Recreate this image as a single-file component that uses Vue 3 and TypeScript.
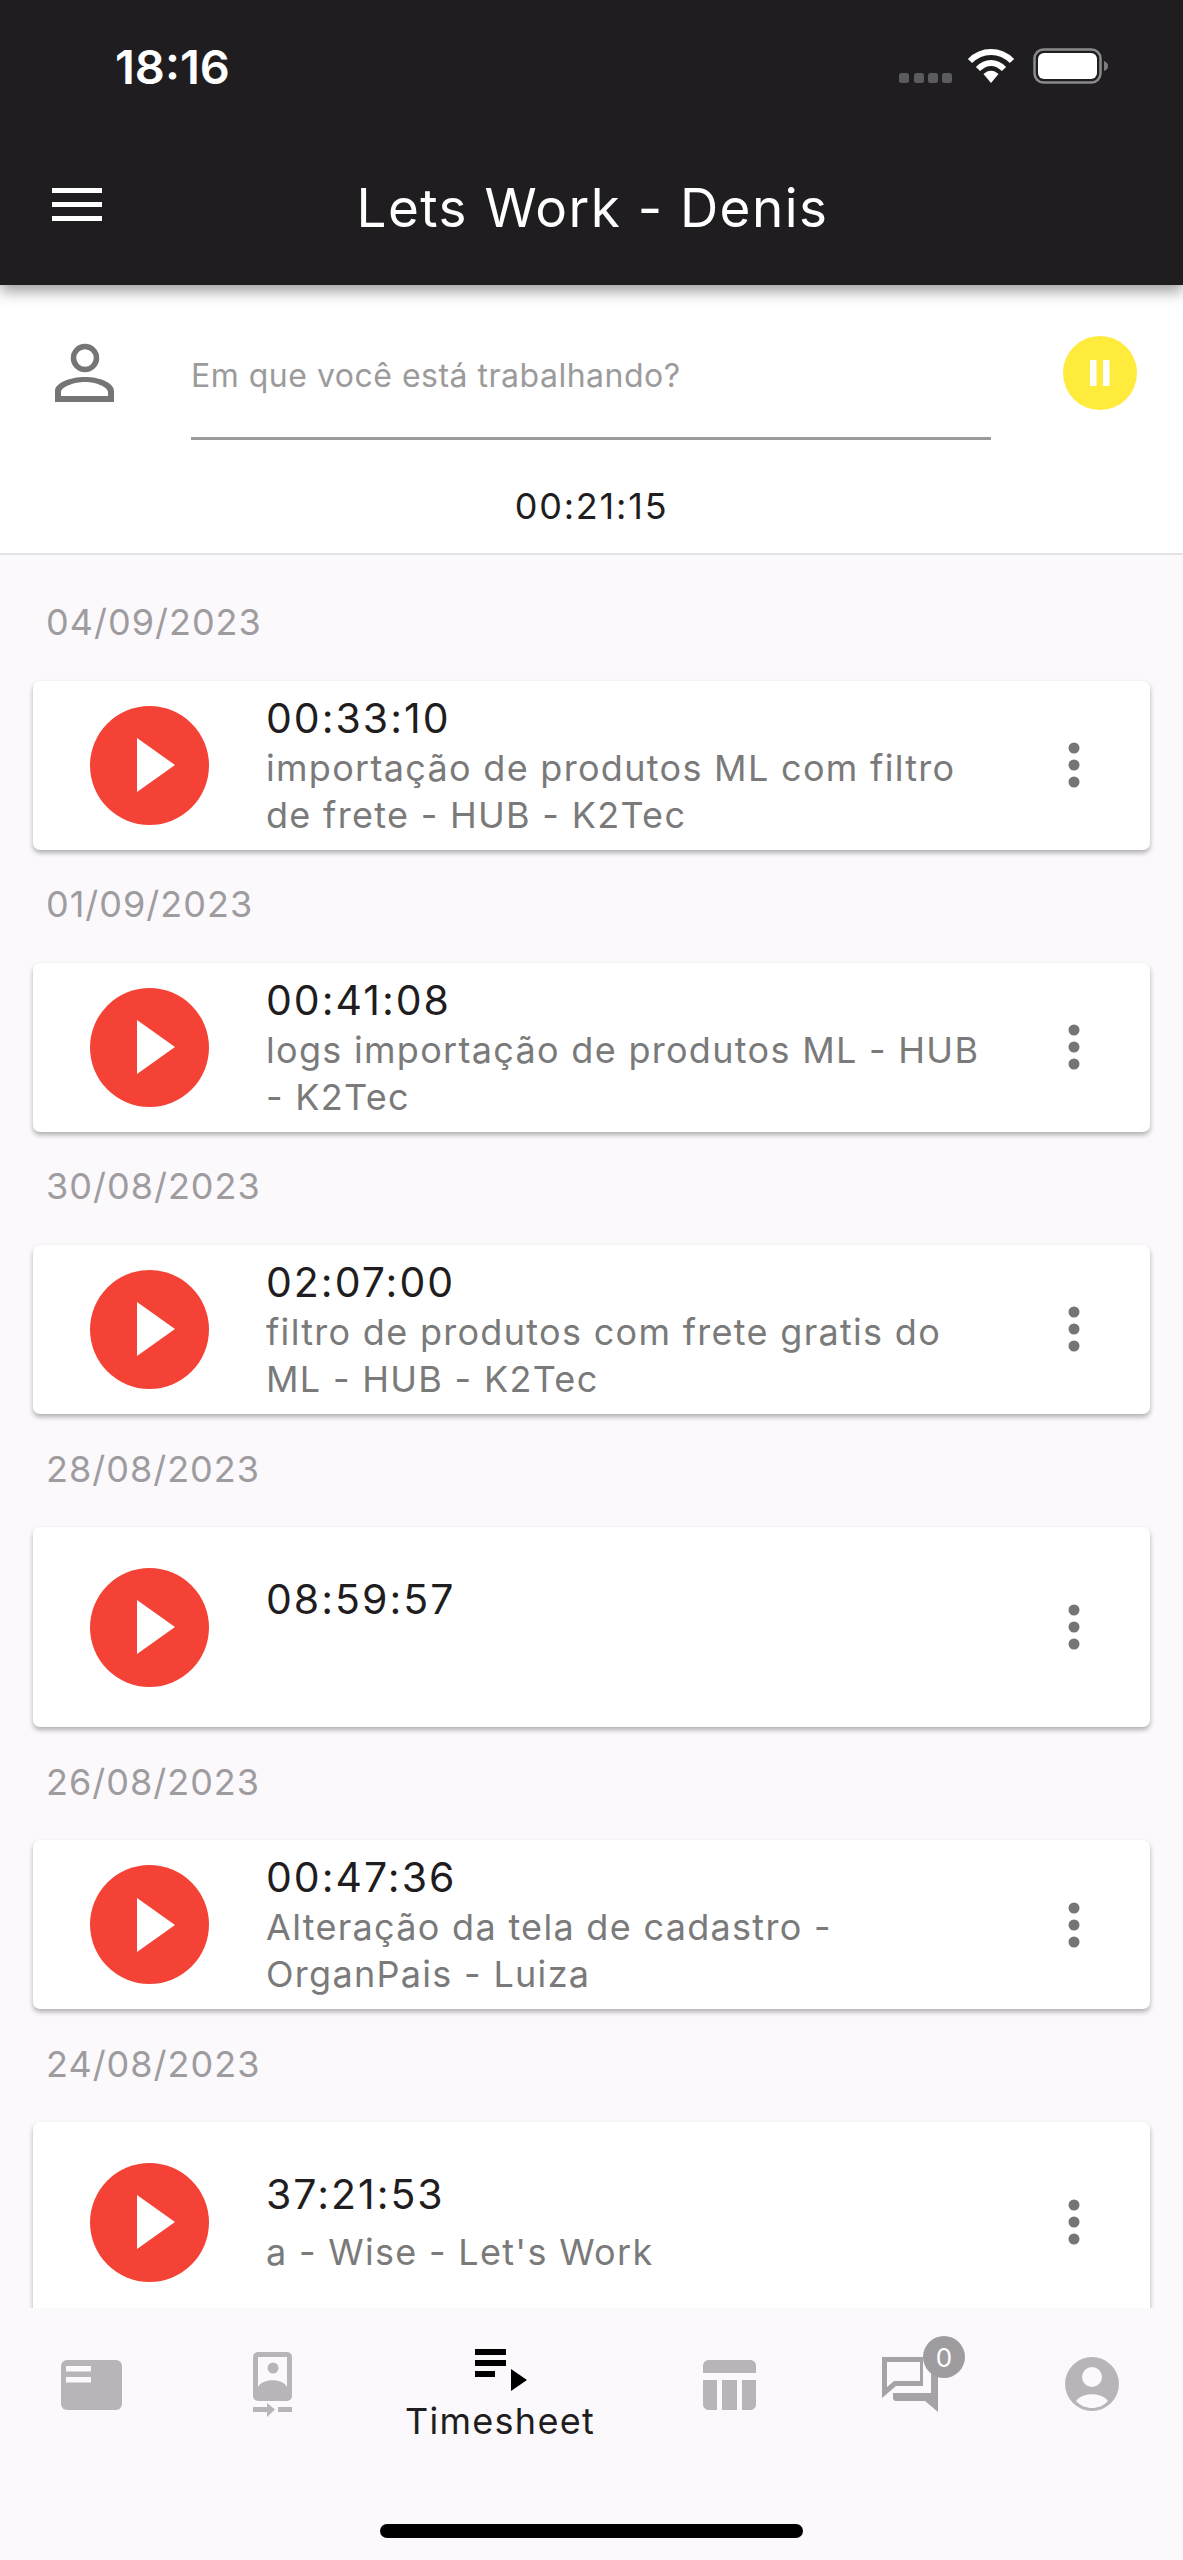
<template>
  <div class="screen">
    <header class="appbar">
      <div class="statusbar">
        <span class="clock">18:16</span>
        <div class="status-icons">
          <svg class="signal" width="53" height="12" viewBox="0 0 53 12">
            <rect v-for="x in [0, 15, 29, 43]" :key="x" :x="x" y="1" width="10" height="10" rx="2.5" fill="#5c5b5d" />
          </svg>
          <svg class="wifi" width="48" height="36" viewBox="0 0 48 36">
            <path d="M3 13 C15 1 33 1 45 13" fill="none" stroke="#fff" stroke-width="6" />
            <path d="M11 21 C19 13 29 13 37 21" fill="none" stroke="#fff" stroke-width="6" />
            <path d="M16.5 26 C21 21.5 27 21.5 31.5 26 L24 35 Z" fill="#fff" />
          </svg>
          <svg width="76" height="36" viewBox="0 0 76 36">
            <rect x="1.5" y="1.5" width="66" height="33" rx="9" fill="none" stroke="#8b8a8c" stroke-width="2.5" />
            <rect x="5" y="5" width="59" height="26" rx="6" fill="#fff" />
            <path d="M71 13 C74 14 75 16 75 18 C75 20 74 22 71 23 Z" fill="#7d7c7e" />
          </svg>
        </div>
      </div>
      <div class="toolbar">
        <svg class="menu" width="52" height="34" viewBox="0 0 52 34">
          <rect y="0" width="50" height="5" fill="#fff" />
          <rect y="14" width="50" height="5" fill="#fff" />
          <rect y="28" width="50" height="5" fill="#fff" />
        </svg>
        <h1 class="title">Lets Work - Denis</h1>
      </div>
    </header>

    <section class="tracker">
      <div class="tracker-row">
        <svg class="person" width="62" height="62" viewBox="0 0 62 62">
          <circle cx="31" cy="16" r="11.5" fill="none" stroke="#757575" stroke-width="5.5" />
          <path d="M1 60 V49 C1 41 16 35 31 35 C46 35 60 41 60 49 V60 Z M7 54 H54 V50 C54 45 42 40 31 40 C20 40 7 45 7 50 Z" fill="#757575" fill-rule="evenodd" />
        </svg>
        <div class="field">Em que você está trabalhando?</div>
        <button class="pause" type="button">
          <svg width="26" height="28" viewBox="0 0 26 28">
            <rect x="3" y="1" width="6.5" height="26" rx="1" fill="#fff" />
            <rect x="16" y="1" width="6.5" height="26" rx="1" fill="#fff" />
          </svg>
        </button>
      </div>
      <div class="running">00:21:15</div>
    </section>

    <main class="list">
      <template v-for="entry in entries" :key="entry.date">
        <div class="date">{{ entry.date }}</div>
        <article class="card" :class="{ tall: entry.lines < 2 }">
          <div class="play">
            <svg width="38" height="54" viewBox="0 0 38 54"><path d="M0 0 L38 27 L0 54 Z" fill="#fff" /></svg>
          </div>
          <div class="info">
            <div class="time">{{ entry.time }}</div>
            <div class="desc">{{ entry.desc }}</div>
          </div>
          <svg class="more" width="12" height="46" viewBox="0 0 12 46">
            <circle cx="6" cy="6" r="5.5" fill="#757575" />
            <circle cx="6" cy="23" r="5.5" fill="#757575" />
            <circle cx="6" cy="40" r="5.5" fill="#757575" />
          </svg>
        </article>
      </template>
    </main>

    <nav class="bottom">
      <div class="tabs">
        <div class="tab">
          <svg width="80" height="80" viewBox="0 0 80 80">
            <rect x="10" y="15" width="61" height="50" rx="6" fill="#b7b5b9" />
            <rect x="15" y="21" width="25" height="5.5" fill="#fbf9fc" />
            <rect x="15" y="32" width="25" height="5.5" fill="#fbf9fc" />
          </svg>
        </div>
        <div class="tab">
          <svg width="80" height="80" viewBox="0 0 80 80">
            <rect x="21" y="7" width="39" height="49" rx="5" fill="#b7b5b9" />
            <rect x="26" y="12" width="29" height="30" fill="#fbf9fc" />
            <circle cx="41" cy="23" r="5.5" fill="#b7b5b9" />
            <path d="M26 42 C30 33 51 33 55 42 V50 H26 Z" fill="#b7b5b9" />
            <path d="M21 62 H35 V58 L43 64.5 L35 72 V67 H21 Z" fill="#b7b5b9" />
            <rect x="46" y="62" width="14" height="5" fill="#b7b5b9" />
          </svg>
        </div>
        <div class="tab active">
          <svg width="80" height="50" viewBox="0 0 80 50">
            <rect x="15" y="4" width="31" height="6" fill="#000" />
            <rect x="15" y="15" width="31" height="6" fill="#000" />
            <rect x="15" y="26" width="20" height="6" fill="#000" />
            <path d="M51 24 L67 35 L51 46 Z" fill="#000" />
          </svg>
          <span class="tab-label">Timesheet</span>
        </div>
        <div class="tab">
          <svg width="80" height="80" viewBox="0 0 80 80">
            <path d="M13 21 C13 17 16 15 19 15 H60 C63 15 66 17 66 21 V28 H13 Z" fill="#b7b5b9" />
            <path d="M13 35 H27 V65 H19 C16 65 13 63 13 59 Z" fill="#b7b5b9" />
            <rect x="32" y="35" width="15" height="30" fill="#b7b5b9" />
            <path d="M52 35 H66 V59 C66 63 63 65 60 65 H52 Z" fill="#b7b5b9" />
          </svg>
        </div>
        <div class="tab">
          <div class="chat">
            <svg width="80" height="80" viewBox="0 0 80 80">
              <path d="M11 12 H52 V41 H25 L11 53 Z M16 17 V42 L23 36 H49 V17 Z" fill="#a5a3a6" fill-rule="evenodd" />
              <path d="M22 48 H60 V25 H67 V67 L54 56 H25 C23 56 22 55 22 53 Z" fill="#a5a3a6" />
            </svg>
            <span class="badge">0</span>
          </div>
        </div>
        <div class="tab">
          <svg width="80" height="80" viewBox="0 0 80 80">
            <circle cx="40" cy="39" r="27" fill="#b7b5b9" />
            <circle cx="40" cy="32" r="10" fill="#fbf9fc" />
            <path d="M24 56 C30 47 50 47 56 56 C51 61 46 63 40 63 C34 63 29 61 24 56 Z" fill="#fbf9fc" />
          </svg>
        </div>
      </div>
      <div class="home-bar"></div>
    </nav>
  </div>
</template>

<script setup lang="ts">
interface Entry {
  date: string
  time: string
  desc: string
  lines: number
}

const entries: Entry[] = [
  { date: '04/09/2023', time: '00:33:10', desc: 'importação de produtos ML com filtro de frete - HUB - K2Tec', lines: 2 },
  { date: '01/09/2023', time: '00:41:08', desc: 'logs importação de produtos ML - HUB - K2Tec', lines: 2 },
  { date: '30/08/2023', time: '02:07:00', desc: 'filtro de produtos com frete gratis do ML - HUB - K2Tec', lines: 2 },
  { date: '28/08/2023', time: '08:59:57', desc: '', lines: 0 },
  { date: '26/08/2023', time: '00:47:36', desc: 'Alteração da tela de cadastro - OrganPais - Luiza', lines: 2 },
  { date: '24/08/2023', time: '37:21:53', desc: "a - Wise - Let's Work", lines: 1 }
]
</script>

<style>
html,
body {
  margin: 0;
  background: #fbf9fc;
}
</style>

<style scoped>
.screen {
  display: flex;
  flex-direction: column;
  height: 2560px;
  overflow: hidden;
  background: #fbf9fc;
  font-family: Inter, Roboto, sans-serif;
}

.appbar {
  position: relative;
  z-index: 2;
  flex: none;
  height: 285px;
  background: #1f1d20;
  box-shadow: 0 6px 14px rgba(0, 0, 0, 0.4);
  color: #fff;
}

.statusbar {
  display: flex;
  align-items: center;
  justify-content: space-between;
  height: 132px;
  padding: 0 0 0 115px;
}

.clock {
  font-size: 47px;
  font-weight: 600;
}

.status-icons {
  display: flex;
  align-items: flex-end;
  gap: 18px;
  padding-right: 74px;
}

.signal {
  margin-right: -3px;
}

.toolbar {
  display: flex;
  align-items: center;
  height: 153px;
  padding-left: 52px;
}

.menu {
  flex: none;
  margin-bottom: 7px;
}

.title {
  flex: 1;
  margin: 0 0 2px;
  padding-right: 102px;
  text-align: center;
  font-size: 53px;
  font-weight: 400;
  letter-spacing: 1.45px;
}

.tracker {
  flex: none;
  height: 270px;
  box-sizing: border-box;
  padding-top: 25px;
  background: #fff;
  border-bottom: 2px solid #e2e1e3;
}

.tracker-row {
  display: flex;
  align-items: flex-start;
  height: 131px;
  padding-left: 54px;
}

.person {
  flex: none;
  margin-top: 32px;
}

.field {
  flex: none;
  box-sizing: border-box;
  width: 800px;
  height: 130px;
  margin-left: 75px;
  padding-top: 46px;
  border-bottom: 3px solid #9a9a9a;
  color: #9b9b9b;
  font-size: 32px;
  letter-spacing: 0.5px;
  line-height: 40px;
}

.pause {
  display: flex;
  align-items: center;
  justify-content: center;
  width: 74px;
  height: 74px;
  margin: 26px 0 0 72px;
  padding: 0;
  border: 0;
  border-radius: 50%;
  background: #ffeb3b;
}

.running {
  margin-top: 43px;
  text-align: center;
  font-size: 36px;
  line-height: 44px;
  letter-spacing: 1.8px;
  color: #1f1d20;
}

.list {
  flex: 1;
  min-height: 0;
  overflow: hidden;
  padding: 13px 33px 0;
  background: #fbf9fc;
}

.date {
  display: flex;
  align-items: center;
  height: 112.5px;
  padding-left: 13px;
  box-sizing: border-box;
  padding-bottom: 4px;
  color: #9e9c9f;
  font-size: 36px;
  letter-spacing: 1px;
}

.card {
  display: flex;
  align-items: center;
  box-sizing: border-box;
  height: 169.6px;
  padding: 0 70px 0 57px;
  background: #fff;
  border-radius: 7px;
  box-shadow: 0 3px 5px rgba(0, 0, 0, 0.3);
}

.card.tall {
  height: 200.5px;
}

.play {
  display: flex;
  flex: none;
  align-items: center;
  justify-content: center;
  width: 119px;
  height: 119px;
  padding-left: 12px;
  box-sizing: border-box;
  border-radius: 50%;
  background: #f44336;
}

.info {
  flex: 1;
  min-width: 0;
  margin-left: 57px;
  margin-right: 81px;
}

.time {
  font-size: 41px;
  line-height: 53px;
  letter-spacing: 2px;
  color: #1f1d20;
}

.desc {
  min-height: 47px;
  color: #7a7a7a;
  font-size: 36px;
  line-height: 47px;
  letter-spacing: 1.3px;
}

.tall .desc {
  margin-top: 8px;
}

.more {
  flex: none;
}

.bottom {
  display: flex;
  flex: none;
  flex-direction: column;
  height: 252px;
  background: #fbf9fc;
}

.tabs {
  display: grid;
  grid-template-columns: 182px 180px 276px 184px 178px 183px;
  padding-top: 37px;
}

.tab {
  display: flex;
  flex-direction: column;
  align-items: center;
}

.tab-label {
  margin-top: 5px;
  color: #1f1d20;
  font-size: 36px;
  line-height: 42px;
  letter-spacing: 1.3px;
}

.chat {
  position: relative;
}

.badge {
  position: absolute;
  top: -9px;
  left: 52px;
  display: flex;
  align-items: center;
  justify-content: center;
  width: 42px;
  height: 42px;
  border-radius: 50%;
  background: #9e9c9f;
  color: #fff;
  font-size: 26px;
}

.home-bar {
  width: 423px;
  height: 14px;
  margin: auto auto 22px;
  border-radius: 7px;
  background: #000;
}
</style>
